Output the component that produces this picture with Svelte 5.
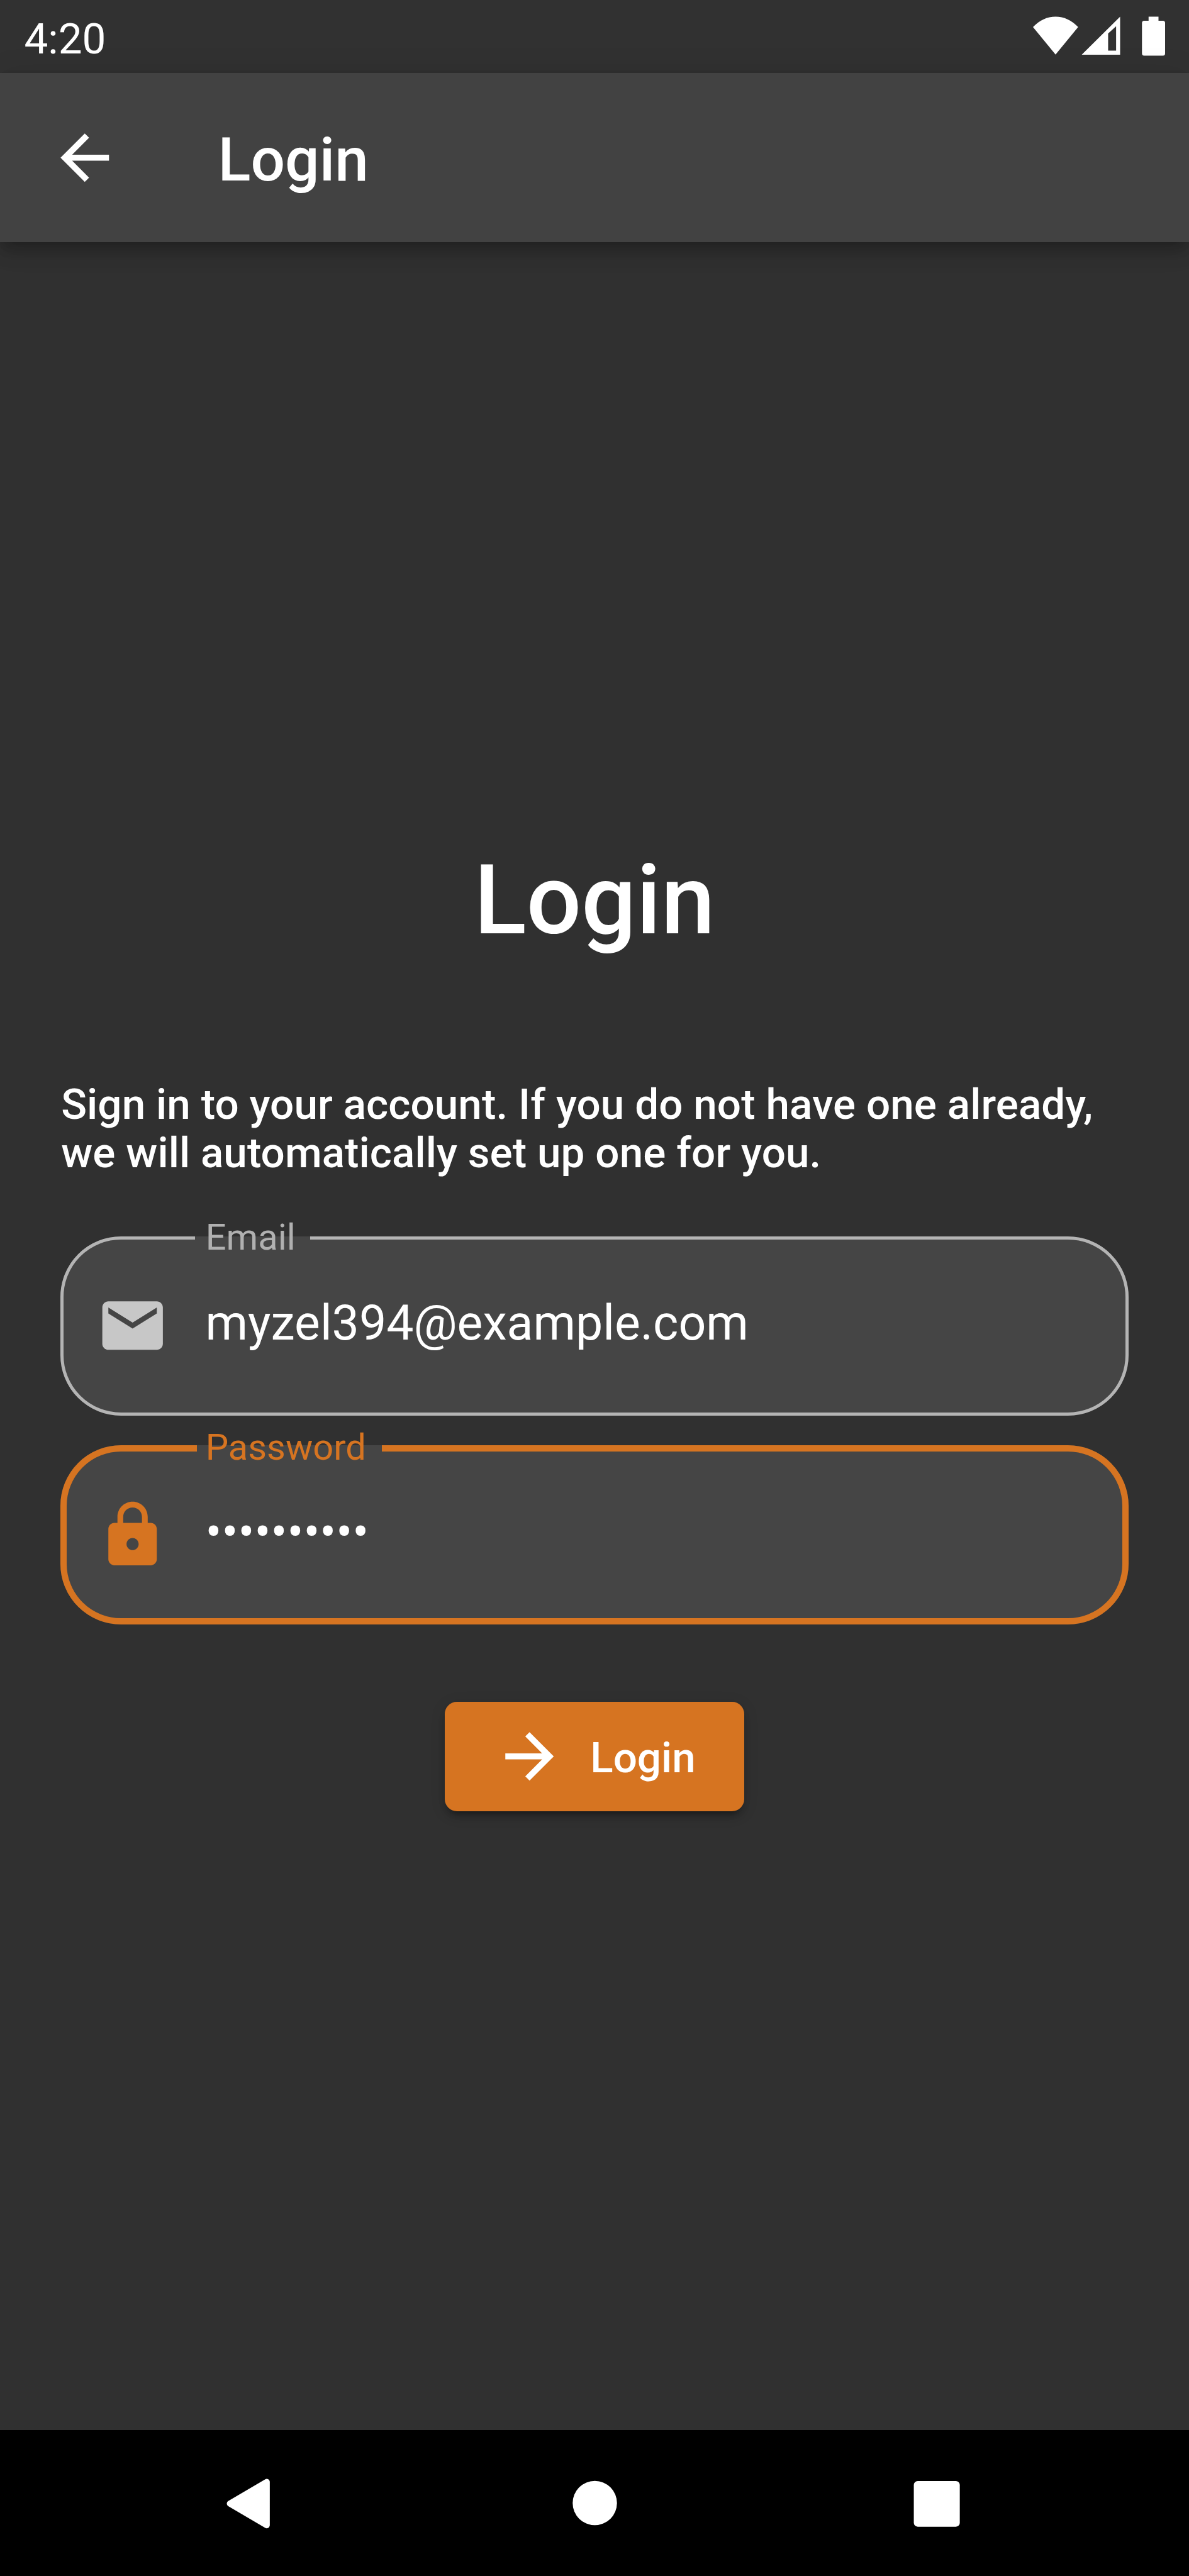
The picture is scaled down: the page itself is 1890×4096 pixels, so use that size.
<script>
  const email = 'myzel394@example.com';
  const password = '•'.repeat(10);
</script>

<div class="screen">
  <header class="status">
    <span class="clock">4:20</span>
    <svg class="indicators" viewBox="0 0 240 72" aria-hidden="true">
      <path d="M41 69.5 0 19.5Q18 .5 41 .5T82 19.5Z" />
      <path fill-rule="evenodd" d="M158.3 .5V69.7H88.5ZM136.5 31V62.3H151V18Z" />
      <path d="M210 .5h18v7.5h8q4 0 4 4v55.500q0 4-4 4h-34q-4 0-4-4V12q0-4 4-4h8z" />
    </svg>
  </header>

  <nav class="appbar">
    <svg class="icon" viewBox="0 0 24 24" aria-label="Back">
      <path d="M20 11H7.83l5.590-5.590L12 4l-8 8 8 8 1.410-1.410L7.830 13H20v-2z" />
    </svg>
    <span class="title">Login</span>
  </nav>

  <main>
    <h1>Login</h1>
    <p class="intro">Sign in to your account. If you do not have one already, we will automatically set up one for you.</p>

    <div class="field">
      <fieldset class="outline"><legend class="notch notch-email"></legend></fieldset>
      <span class="label">Email</span>
      <svg class="icon" viewBox="0 0 24 24" aria-hidden="true">
        <path d="M20 4H4c-1.100 0-1.990.9-1.990 2L2 18c0 1.100.9 2 2 2h16c1.100 0 2-.9 2-2V6c0-1.100-.9-2-2-2zm0 4l-8 5-8-5V6l8 5 8-5v2z" />
      </svg>
      <span class="value">{email}</span>
    </div>

    <div class="field focused">
      <fieldset class="outline"><legend class="notch notch-password"></legend></fieldset>
      <span class="label">Password</span>
      <svg class="icon" viewBox="0 0 24 24" aria-hidden="true">
        <path d="M18 8h-1V6c0-2.760-2.240-5-5-5S7 3.240 7 6v2H6c-1.100 0-2 .9-2 2v10c0 1.100.9 2 2 2h12c1.100 0 2-.9 2-2V10c0-1.100-.9-2-2-2zm-6 9c-1.100 0-2-.9-2-2s.9-2 2-2 2 .9 2 2-.9 2-2 2zm3.100-9H8.900V6c0-1.710 1.390-3.100 3.100-3.100s3.100 1.390 3.100 3.100v2z" />
      </svg>
      <span class="value">{password}</span>
    </div>

    <button type="button">
      <svg class="icon" viewBox="0 0 24 24" aria-hidden="true">
        <path d="M12 4l-1.410 1.410L16.170 11H4v2h12.170l-5.580 5.590L12 20l8-8z" />
      </svg>
      <span class="button-text">Login</span>
    </button>
  </main>

  <footer class="navbar">
    <svg viewBox="0 0 24 24" aria-label="Back">
      <path class="rounded" d="M17.960 4.870V19.270L5.700 12.070Z" />
    </svg>
    <svg viewBox="0 0 24 24" aria-label="Home"><circle cx="12" cy="11.900" r="7.350" /></svg>
    <svg viewBox="0 0 24 24" aria-label="Overview"><rect x="3.250" y="4.600" width="15.250" height="15.150" rx="1.300" /></svg>
  </footer>
</div>

<style>
  :global(body) {
    margin: 0;
    background: #000;
  }

  .screen {
    --dp: 4.8125px;
    --accent: #d67421;
    display: flex;
    flex-direction: column;
    width: 1890px;
    height: 4096px;
    overflow: hidden;
    background: #303030;
    color: #fff;
    font-family: Roboto, 'Liberation Sans', sans-serif;
  }

  svg {
    display: block;
    flex: none;
    fill: currentColor;
  }

  .icon {
    width: calc(24 * var(--dp));
    height: calc(24 * var(--dp));
  }

  .status {
    display: flex;
    flex: none;
    justify-content: space-between;
    box-sizing: border-box;
    height: calc(24 * var(--dp));
    padding: 0 38.5px;
    background: #313131;
  }

  .clock {
    padding-top: 17.5px;
    font-size: calc(14 * var(--dp));
    line-height: 87px;
  }

  .indicators {
    width: 210px;
    height: 63px;
    margin-top: 26px;
  }

  .appbar {
    position: relative;
    display: flex;
    flex: none;
    align-items: center;
    gap: calc(32 * var(--dp));
    height: calc(56 * var(--dp));
    padding: 0 calc(16 * var(--dp));
    background: #424242;
    box-shadow:
      0 10px 19px -5px rgba(0, 0, 0, 0.2),
      0 19px 24px rgba(0, 0, 0, 0.1),
      0 5px 48px rgba(0, 0, 0, 0.1);
  }

  .title {
    padding-top: 7px;
    font-size: calc(20 * var(--dp));
    font-weight: 500;
  }

  main {
    display: flex;
    flex: 1;
    flex-direction: column;
    align-items: center;
    padding: 957px calc(20 * var(--dp)) 0;
  }

  h1 {
    margin: 0 0 195px;
    font-size: calc(32 * var(--dp));
    font-weight: 500;
    line-height: 180px;
  }

  .intro {
    align-self: stretch;
    margin: 0 0 94.5px;
    padding-left: 1px;
    font-size: calc(14 * var(--dp));
    font-weight: 500;
    letter-spacing: 0.08px;
    line-height: 77px;
  }

  .field {
    position: relative;
    display: flex;
    align-self: stretch;
    align-items: center;
    gap: calc(12 * var(--dp));
    box-sizing: border-box;
    height: 285px;
    margin-bottom: 47.5px;
    padding: 0 57px;
    border-radius: calc(20 * var(--dp));
    background: #454545;
  }

  .field .icon {
    color: #c7c7c7;
  }

  .outline {
    position: absolute;
    inset: 0;
    margin: 0;
    padding: 0;
    border: 5px solid #b4b4b4;
    border-radius: inherit;
  }

  .notch {
    height: 1px;
    padding: 0;
  }

  .notch-email {
    width: 183px;
    margin-left: 209px;
  }

  .notch-password {
    width: 294px;
    margin-left: 207px;
  }

  .label {
    position: absolute;
    top: -34px;
    left: 230.5px;
    color: #b0b0b0;
    font-size: calc(12 * var(--dp));
    line-height: 70px;
  }

  .value {
    margin-top: -9px;
    font-size: calc(16 * var(--dp));
    line-height: 90px;
  }

  .focused {
    margin-bottom: 123px;
  }

  .focused .outline {
    border: 10px solid var(--accent);
  }

  .focused .label,
  .focused .icon {
    color: var(--accent);
  }

  .focused .label {
    top: -32px;
  }

  button {
    display: flex;
    align-items: center;
    gap: calc(8 * var(--dp));
    box-sizing: border-box;
    height: 174px;
    padding: 0 calc(16 * var(--dp));
    border: 0;
    border-radius: calc(4 * var(--dp));
    background: var(--accent);
    color: #fff;
    font: 500 calc(14 * var(--dp)) / 80px Roboto, 'Liberation Sans', sans-serif;
    box-shadow:
      0 14px 5px -10px rgba(0, 0, 0, 0.2),
      0 10px 10px rgba(0, 0, 0, 0.14),
      0 5px 24px rgba(0, 0, 0, 0.12);
  }

  .button-text {
    padding-top: 3px;
  }

  .navbar {
    display: flex;
    flex: none;
    align-items: center;
    justify-content: space-between;
    box-sizing: border-box;
    height: 232px;
    padding: 0 338px;
    background: #000;
  }

  .navbar svg {
    width: 115px;
    height: 115px;
  }

  .rounded {
    stroke: currentColor;
    stroke-width: 2;
    stroke-linejoin: round;
  }
</style>
